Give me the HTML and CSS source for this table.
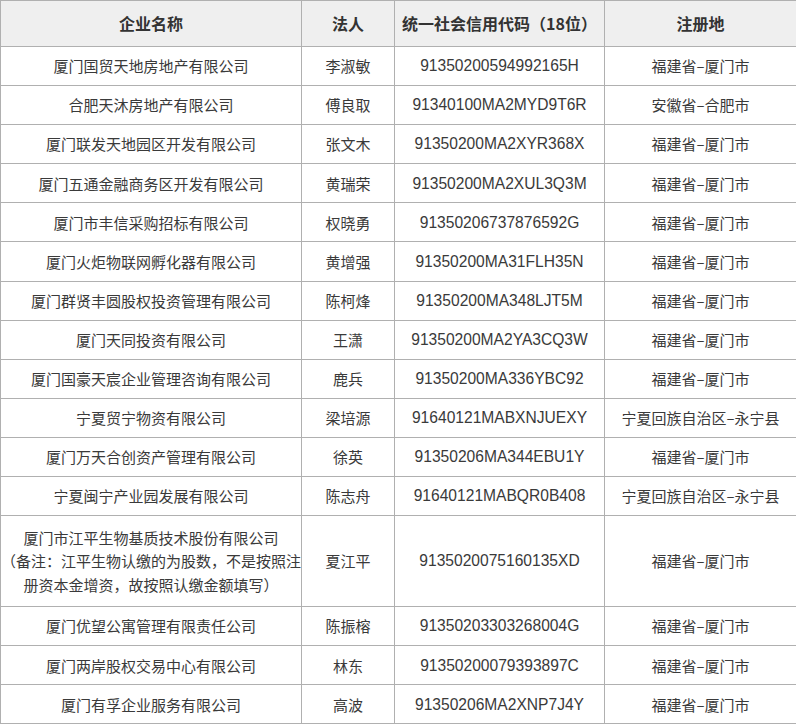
FILE: index.html
```html
<!DOCTYPE html>
<html lang="zh-CN">
<head>
<meta charset="utf-8">
<title>企业名单</title>
<link rel="stylesheet" href="styles.css">
</head>
<body>
<table class="grid">
  <colgroup>
    <col class="c-name">
    <col class="c-person">
    <col class="c-code">
    <col class="c-place">
  </colgroup>
  <thead>
    <tr><th>企业名称</th><th>法人</th><th>统一社会信用代码（18位）</th><th>注册地</th></tr>
  </thead>
  <tbody>
    <tr><td>厦门国贸天地房地产有限公司</td><td>李淑敏</td><td class="code">91350200594992165H</td><td>福建省–厦门市</td></tr>
    <tr><td>合肥天沐房地产有限公司</td><td>傅良取</td><td class="code">91340100MA2MYD9T6R</td><td>安徽省–合肥市</td></tr>
    <tr><td>厦门联发天地园区开发有限公司</td><td>张文木</td><td class="code">91350200MA2XYR368X</td><td>福建省–厦门市</td></tr>
    <tr><td>厦门五通金融商务区开发有限公司</td><td>黄瑞荣</td><td class="code">91350200MA2XUL3Q3M</td><td>福建省–厦门市</td></tr>
    <tr><td>厦门市丰信采购招标有限公司</td><td>权晓勇</td><td class="code">91350206737876592G</td><td>福建省–厦门市</td></tr>
    <tr><td>厦门火炬物联网孵化器有限公司</td><td>黄增强</td><td class="code">91350200MA31FLH35N</td><td>福建省–厦门市</td></tr>
    <tr><td>厦门群贤丰圆股权投资管理有限公司</td><td>陈柯烽</td><td class="code">91350200MA348LJT5M</td><td>福建省–厦门市</td></tr>
    <tr><td>厦门天同投资有限公司</td><td>王潇</td><td class="code">91350200MA2YA3CQ3W</td><td>福建省–厦门市</td></tr>
    <tr><td>厦门国豪天宸企业管理咨询有限公司</td><td>鹿兵</td><td class="code">91350200MA336YBC92</td><td>福建省–厦门市</td></tr>
    <tr><td>宁夏贸宁物资有限公司</td><td>梁培源</td><td class="code">91640121MABXNJUEXY</td><td>宁夏回族自治区–永宁县</td></tr>
    <tr><td>厦门万天合创资产管理有限公司</td><td>徐英</td><td class="code">91350206MA344EBU1Y</td><td>福建省–厦门市</td></tr>
    <tr><td>宁夏闽宁产业园发展有限公司</td><td>陈志舟</td><td class="code">91640121MABQR0B408</td><td>宁夏回族自治区–永宁县</td></tr>
    <tr class="tall"><td class="multi"><span class="ln">厦门市江平生物基质技术股份有限公司</span><span class="ln">（备注：江平生物认缴的为股数，不是按照注</span><span class="ln">册资本金增资，故按照认缴金额填写）</span></td><td>夏江平</td><td class="code">9135020075160135XD</td><td>福建省–厦门市</td></tr>
    <tr><td>厦门优望公寓管理有限责任公司</td><td>陈振榕</td><td class="code">91350203303268004G</td><td>福建省–厦门市</td></tr>
    <tr><td>厦门两岸股权交易中心有限公司</td><td>林东</td><td class="code">91350200079393897C</td><td>福建省–厦门市</td></tr>
    <tr><td>厦门有孚企业服务有限公司</td><td>高波</td><td class="code">91350206MA2XNP7J4Y</td><td>福建省–厦门市</td></tr>
  </tbody>
</table>
</body>
</html>
```

FILE: styles.css
```css
html, body {
  margin: 0;
  padding: 0;
  background: #ffffff;
}

.grid {
  width: 796px;
  border-collapse: collapse;
  table-layout: fixed;
  font-family: "Noto Sans CJK SC", "Noto Sans", sans-serif;
  font-size: 15px;
  color: #3a3a3a;
}

.c-name { width: 301px; }
.c-person { width: 93px; }
.c-code { width: 210px; }
.c-place { width: 192px; }

.grid th,
.grid td {
  border: 1px solid #b0b0b0;
  text-align: center;
  vertical-align: middle;
  line-height: 23.5px;
  padding: 7.3px 2px;
  font-weight: normal;
}

.grid th {
  background: #efefef;
  font-size: 16px;
  font-weight: bold;
  color: #333333;
  padding: 10.75px 2px;
}

.grid td.code {
  font-family: "Liberation Sans", "Noto Sans CJK SC", sans-serif;
  font-size: 15.6px;
}

.grid tr.tall td {
  padding-top: 9.75px;
  padding-bottom: 9.75px;
}

.grid td.multi {
  padding-left: 0;
  padding-right: 0;
}

.ln {
  display: block;
  white-space: nowrap;
}
```
